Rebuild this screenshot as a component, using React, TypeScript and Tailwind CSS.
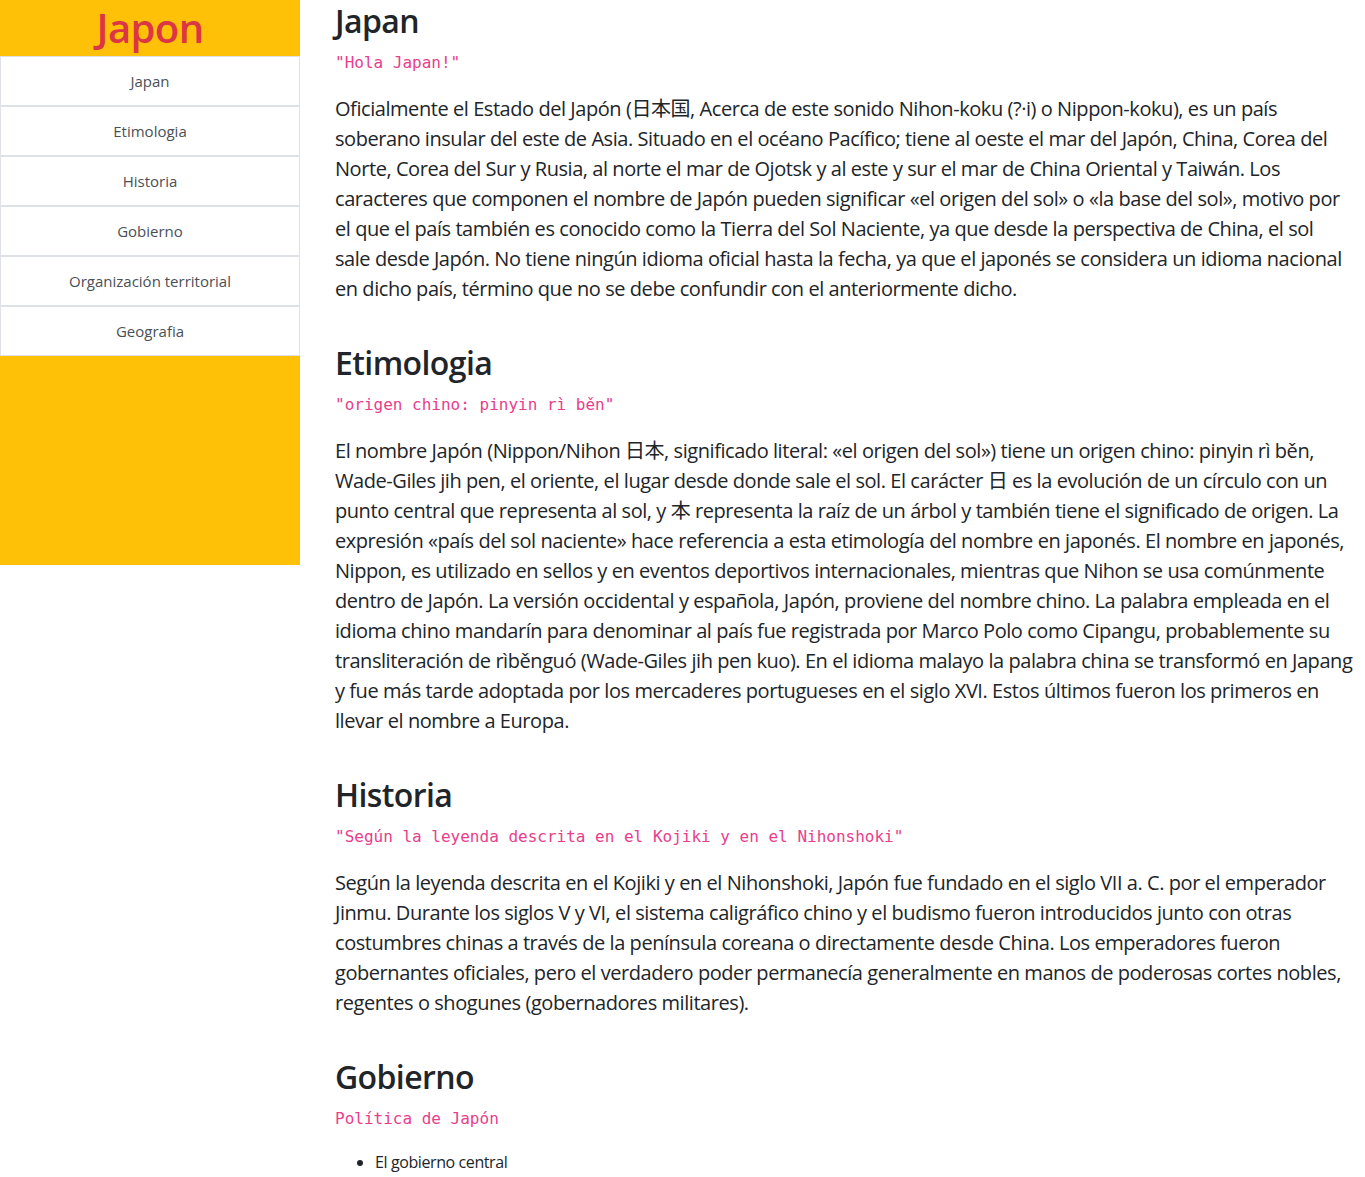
const navItems = ['Japan', 'Etimologia', 'Historia', 'Gobierno', 'Organización territorial', 'Geografia'];

const sections = [
  {
    title: 'Japan',
    quote: '"Hola Japan!"',
    lines: [
      'Oficialmente el Estado del Japón (日本国, Acerca de este sonido Nihon-koku (?·i) o Nippon-koku), es un país',
      'soberano insular del este de Asia. Situado en el océano Pacífico; tiene al oeste el mar del Japón, China, Corea del',
      'Norte, Corea del Sur y Rusia, al norte el mar de Ojotsk y al este y sur el mar de China Oriental y Taiwán. Los',
      'caracteres que componen el nombre de Japón pueden significar «el origen del sol» o «la base del sol», motivo por',
      'el que el país también es conocido como la Tierra del Sol Naciente, ya que desde la perspectiva de China, el sol',
      'sale desde Japón. No tiene ningún idioma oficial hasta la fecha, ya que el japonés se considera un idioma nacional',
      'en dicho país, término que no se debe confundir con el anteriormente dicho.',
    ],
  },
  {
    title: 'Etimologia',
    quote: '"origen chino: pinyin rì běn"',
    lines: [
      'El nombre Japón (Nippon/Nihon 日本, significado literal: «el origen del sol») tiene un origen chino: pinyin rì běn,',
      'Wade-Giles jih pen, el oriente, el lugar desde donde sale el sol. El carácter 日 es la evolución de un círculo con un',
      'punto central que representa al sol, y 本 representa la raíz de un árbol y también tiene el significado de origen. La',
      'expresión «país del sol naciente» hace referencia a esta etimología del nombre en japonés. El nombre en japonés,',
      'Nippon, es utilizado en sellos y en eventos deportivos internacionales, mientras que Nihon se usa comúnmente',
      'dentro de Japón. La versión occidental y española, Japón, proviene del nombre chino. La palabra empleada en el',
      'idioma chino mandarín para denominar al país fue registrada por Marco Polo como Cipangu, probablemente su',
      'transliteración de rìběnguó (Wade-Giles jih pen kuo). En el idioma malayo la palabra china se transformó en Japang',
      'y fue más tarde adoptada por los mercaderes portugueses en el siglo XVI. Estos últimos fueron los primeros en',
      'llevar el nombre a Europa.',
    ],
  },
  {
    title: 'Historia',
    quote: '"Según la leyenda descrita en el Kojiki y en el Nihonshoki"',
    lines: [
      'Según la leyenda descrita en el Kojiki y en el Nihonshoki, Japón fue fundado en el siglo VII a. C. por el emperador',
      'Jinmu. Durante los siglos V y VI, el sistema caligráfico chino y el budismo fueron introducidos junto con otras',
      'costumbres chinas a través de la península coreana o directamente desde China. Los emperadores fueron',
      'gobernantes oficiales, pero el verdadero poder permanecía generalmente en manos de poderosas cortes nobles,',
      'regentes o shogunes (gobernadores militares).',
    ],
  },
];

const sans = "font-['Open_Sans','Noto_Sans_CJK_JP',sans-serif]";

export default function App() {
  return (
    <div className={`flex min-h-[1177px] bg-white text-[#212529] ${sans}`}>
      <aside className="w-[300px] shrink-0 self-start bg-[#ffc107] h-[565px]">
        <div className="h-[56px] flex items-center justify-center">
          <h1 className="text-[40px] leading-none font-semibold text-[#dc3545] tracking-[-0.6px]">Japon</h1>
        </div>
        <nav className="flex flex-col">
          {navItems.map((item) => (
            <a
              key={item}
              href={`#${item}`}
              className="h-[50px] flex items-center justify-center bg-white border border-[#dee2e6] text-[15px] text-[#495057]"
            >
              {item}
            </a>
          ))}
        </nav>
      </aside>

      <main className="flex-1 flex flex-col gap-[40px] pl-[35px] pr-[15px] pt-[2px]">
        {sections.map((s) => (
          <section key={s.title} className="flex flex-col">
            <h2 className="text-[32px] leading-[38px] font-semibold mb-[8px] tracking-[-0.6px]">{s.title}</h2>
            <p className="text-[16px] leading-[30px] text-[#e83e8c] font-['DejaVu_Sans_Mono',monospace]">{s.quote}</p>
            <p className="mt-[16px] text-[20px] leading-[30px] tracking-[-0.44px]">
              {s.lines.map((l) => (
                <span key={l} className="block whitespace-nowrap">{l}</span>
              ))}
            </p>
          </section>
        ))}

        <section className="flex flex-col">
          <h2 className="text-[32px] leading-[38px] font-semibold mb-[8px] tracking-[-0.6px]">Gobierno</h2>
          <p className="text-[16px] leading-[30px] text-[#e83e8c] font-['DejaVu_Sans_Mono',monospace]">Política de Japón</p>
          <ul className="mt-[16px] pl-[40px] list-disc text-[16px] leading-[24px] tracking-[-0.4px]">
            <li>El gobierno central</li>
          </ul>
        </section>
      </main>
    </div>
  );
}
